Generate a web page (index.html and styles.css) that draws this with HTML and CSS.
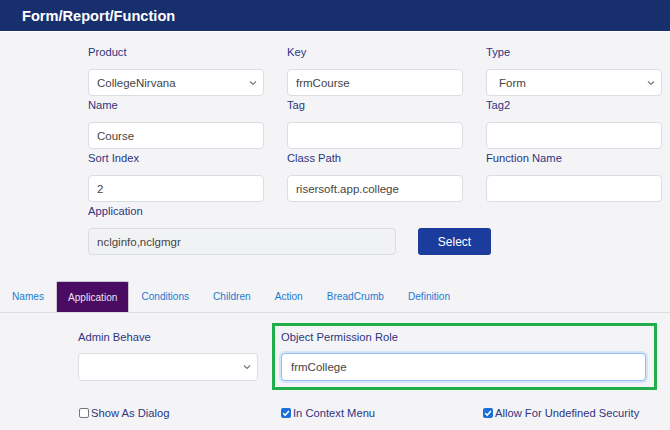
FILE: index.html
```html
<!DOCTYPE html>
<html>
<head>
<meta charset="utf-8">
<link rel="stylesheet" href="styles.css">
</head>
<body>
<div class="header"><span class="title">Form/Report/Function</span></div>

<div class="form">
  <div class="grid">
    <div class="field">
      <div class="label">Product</div>
      <div class="control select"><span>CollegeNirvana</span><svg class="chev" width="8" height="6" viewBox="0 0 8 6"><path d="M1 1.5 L4 4.5 L7 1.5" fill="none" stroke="#777" stroke-width="1.2"/></svg></div>
    </div>
    <div class="field">
      <div class="label">Key</div>
      <div class="control">frmCourse</div>
    </div>
    <div class="field">
      <div class="label">Type</div>
      <div class="control select wide-pad"><span>Form</span><svg class="chev" width="8" height="6" viewBox="0 0 8 6"><path d="M1 1.5 L4 4.5 L7 1.5" fill="none" stroke="#777" stroke-width="1.2"/></svg></div>
    </div>

    <div class="field">
      <div class="label">Name</div>
      <div class="control">Course</div>
    </div>
    <div class="field">
      <div class="label">Tag</div>
      <div class="control"></div>
    </div>
    <div class="field">
      <div class="label">Tag2</div>
      <div class="control"></div>
    </div>

    <div class="field">
      <div class="label">Sort Index</div>
      <div class="control">2</div>
    </div>
    <div class="field">
      <div class="label">Class Path</div>
      <div class="control">risersoft.app.college</div>
    </div>
    <div class="field">
      <div class="label">Function Name</div>
      <div class="control"></div>
    </div>
  </div>

  <div class="field">
    <div class="label">Application</div>
    <div class="app-row">
      <div class="control readonly app-input">nclginfo,nclgmgr</div>
      <button class="btn">Select</button>
    </div>
  </div>
</div>

<div class="tabs">
  <span class="tab">Names</span>
  <span class="tab active">Application</span>
  <span class="tab">Conditions</span>
  <span class="tab">Children</span>
  <span class="tab">Action</span>
  <span class="tab">BreadCrumb</span>
  <span class="tab">Definition</span>
</div>

<div class="lower">
  <div class="lower-row">
    <div class="field admin">
      <div class="label">Admin Behave</div>
      <div class="control select tall"><span></span><svg class="chev" width="8" height="6" viewBox="0 0 8 6"><path d="M1 1.5 L4 4.5 L7 1.5" fill="none" stroke="#777" stroke-width="1.2"/></svg></div>
    </div>
    <div class="highlight">
      <div class="label">Object Permission Role</div>
      <div class="control tall focus">frmCollege</div>
    </div>
  </div>

  <div class="checks">
    <label class="check"><span class="box"></span>Show As Dialog</label>
    <label class="check"><span class="box on"><svg width="10" height="10" viewBox="0 0 10 10"><path d="M2.2 5.2 L4.2 7.2 L7.9 3" fill="none" stroke="#fff" stroke-width="1.6"/></svg></span>In Context Menu</label>
    <label class="check"><span class="box on"><svg width="10" height="10" viewBox="0 0 10 10"><path d="M2.2 5.2 L4.2 7.2 L7.9 3" fill="none" stroke="#fff" stroke-width="1.6"/></svg></span>Allow For Undefined Security</label>
  </div>
</div>
</body>
</html>
```

FILE: styles.css
```css
* { box-sizing: border-box; }

body {
  margin: 0;
  background: #f4f4f7;
  font-family: "Liberation Sans", Arial, sans-serif;
  width: 670px;
  height: 430px;
  overflow: hidden;
}

.header {
  height: 32px;
  background: #172f6c;
  border-bottom: 1px solid #ffffff;
  display: flex;
  align-items: center;
  padding-left: 22px;
}

.title {
  color: #ffffff;
  font-weight: bold;
  font-size: 14.6px;
}

.form {
  padding: 11px 0 0 88px;
}

.grid {
  display: grid;
  grid-template-columns: 176px 176px 176px;
  column-gap: 23px;
}

.label {
  font-size: 11.2px;
  line-height: 18px;
  color: #2e3480;
  margin-bottom: 8px;
  white-space: nowrap;
}

.control {
  height: 27px;
  background: #ffffff;
  border: 1px solid #dadde3;
  border-radius: 4px;
  font-size: 11.5px;
  color: #454545;
  padding: 0 8px;
  display: flex;
  align-items: center;
}

.control.select {
  justify-content: space-between;
  padding-right: 6px;
}

.control.wide-pad {
  padding-left: 12px;
}

.chev { display: block; }

.control.readonly {
  background: #f1f2f4;
}

.app-row {
  display: flex;
  align-items: center;
  gap: 22px;
}

.app-input {
  width: 308px;
}

.btn {
  width: 73px;
  height: 27px;
  background: #1b3c9d;
  border: none;
  border-radius: 3px;
  color: #ffffff;
  font-family: "Liberation Sans", Arial, sans-serif;
  font-size: 12px;
  padding: 0;
}

.tabs {
  margin-top: 26px;
  height: 32px;
  border-bottom: 1px solid #dddee2;
  display: flex;
}

.tab {
  height: 31px;
  padding: 0 12px;
  font-size: 10.1px;
  color: #1e7ad0;
  display: flex;
  align-items: center;
  white-space: nowrap;
}

.tab.active {
  background: #4a0b62;
  color: #e9e2f0;
  border: 1px solid #c9c4cf;
  border-bottom: none;
  border-radius: 2px 2px 0 0;
  padding: 0 11px;
}

.lower {
  padding: 10px 0 0 78px;
}

.lower-row {
  display: flex;
  align-items: flex-start;
}

.admin {
  width: 180px;
  padding-top: 5px;
}

.admin .label,
.highlight .label {
  margin-bottom: 7px;
}

.control.tall {
  height: 28px;
}

.highlight {
  margin-left: 14px;
  width: 385px;
  height: 67px;
  border: 3px solid #1fae4a;
  padding: 2px 8px 0 6px;
}

.control.focus {
  border: 1px solid #93bdf0;
  box-shadow: 0 0 0 2px #d3e3f8;
  padding-left: 9px;
}

.checks {
  margin-top: 14px;
  display: grid;
  grid-template-columns: 202px 202px 190px;
}

.check {
  display: flex;
  align-items: center;
  font-size: 11.2px;
  line-height: 18px;
  color: #2e3480;
  white-space: nowrap;
}

.box {
  width: 10px;
  height: 10px;
  margin: 0 2px 0 1px;
  border: 1px solid #767676;
  border-radius: 2px;
  background: #ffffff;
  display: inline-flex;
}

.box.on {
  border: none;
  background: #1a6fd9;
}

.box svg { display: block; }
```
